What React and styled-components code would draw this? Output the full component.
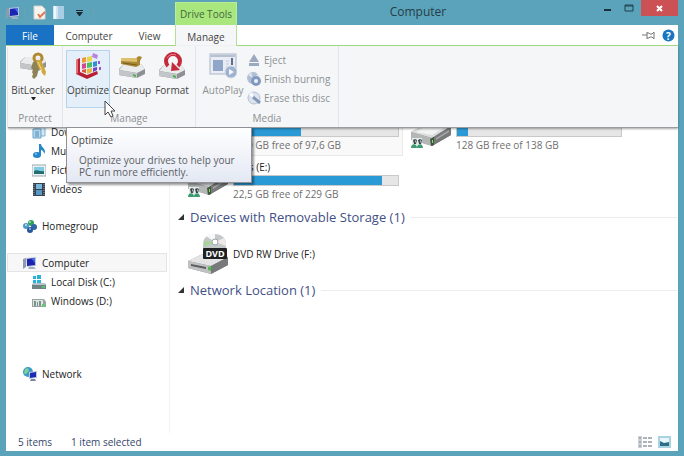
import React from 'react';
import styled, { createGlobalStyle } from 'styled-components';

const GlobalStyle = createGlobalStyle`
	* {
		box-sizing: border-box;
	}
	body {
		margin: 0;
		background-color: #5aa3bb;
		font-family: "Open Sans", "Noto Sans", sans-serif;
		font-size: 10px;
		line-height: 14px;
		color: #222;
	}
	button {
		margin: 0;
		padding: 0;
		border: 0;
		background: none;
		font: inherit;
		color: inherit;
	}
	a {
		color: inherit;
		text-decoration: none;
	}
	h1, h2, p, ul {
		margin: 0;
		padding: 0;
		font: inherit;
		list-style: none;
	}
	svg {
		display: block;
		flex: none;
	}
`;

const Window = styled.div`
	display: flex;
	flex-direction: column;
	min-height: 100vh;
	padding: 0 6px 5px;
`;

const TitleBar = styled.header`
	display: flex;
	height: 25px;
`;
const QuickAccess = styled.div`
	display: flex;
	align-items: center;
	width: 169px;
`;
const QuickButton = styled.button`
	display: flex;
	justify-content: center;
	width: 20px;
`;
const Separator = styled.span`
	width: 1px;
	height: 12px;
	margin: 0 4px;
	background-color: #6f9fb0;
`;
const ContextTab = styled.div`
	width: 62px;
	margin-top: 2px;
	padding-top: 4px;
	background-color: #a9e77e;
	border: 1px solid #b9ee95;
	border-bottom: 0;
	color: #44663a;
	text-align: center;
	white-space: nowrap;
`;
const Title = styled.h1`
	flex: 1;
	padding-top: 4px;
	font-size: 12px;
	line-height: 16px;
	text-align: center;
	color: #263c46;
`;
const Controls = styled.div`
	display: flex;
	height: 16px;
`;
const ControlButton = styled.button`
	display: flex;
	align-items: center;
	justify-content: center;
	width: ${(props) => props.$width}px;
	background-color: ${(props) => (props.$close ? '#cb5155' : 'transparent')};
`;

const TabArea = styled.div`
	position: relative;
	z-index: 1;
`;
const TabRow = styled.nav`
	display: flex;
	height: 21px;
	background-color: #fff;
	border-bottom: 1px solid #a6dd84;
`;
const Tab = styled.button`
	width: ${(props) => props.$width}px;
	height: ${(props) => (props.$active ? 21 : 20)}px;
	padding-top: 2px;
	background-color: ${(props) => (props.$active ? '#f5f6f7' : '#fff')};
	border: solid #b2e294;
	border-width: ${(props) => (props.$active ? '0 1px' : '0')};
	color: #444;
`;
const FileTab = styled(Tab)`
	background-color: #1a72c4;
	color: #fff;
`;
const TabTools = styled.div`
	display: flex;
	align-items: center;
	gap: 6px;
	margin-left: auto;
	padding-right: 3px;
`;

const Ribbon = styled.section`
	position: absolute;
	top: 100%;
	left: 2px;
	right: 0;
	display: flex;
	height: 82px;
	background-color: #f5f6f8;
	border-bottom: 1px solid #9a9da0;
	box-shadow: 0 1px 2px rgba(0, 0, 0, 0.35);
`;
const Group = styled.div`
	position: relative;
	display: flex;
	flex-direction: column;
	justify-content: space-between;
	width: ${(props) => props.$width}px;
	padding: 4px 3px 2px;
	border-right: 1px solid #e2e4e7;
`;
const GroupTools = styled.div`
	display: flex;
`;
const GroupName = styled.div`
	text-align: center;
	color: #8c8f92;
`;
const BigButton = styled.button`
	display: flex;
	flex-direction: column;
	align-items: center;
	width: ${(props) => props.$width || 44}px;
	height: 58px;
	padding-top: 1px;
	background-color: ${(props) => (props.$hover ? '#e4eff9' : 'transparent')};
	border: 1px solid ${(props) => (props.$hover ? '#b4d3ec' : 'transparent')};
	color: ${(props) => (props.disabled ? '#8d9195' : '#444')};
	white-space: nowrap;

	svg + span {
		margin-top: 3px;
	}
`;
const SmallList = styled.div`
	display: flex;
	flex-direction: column;
	gap: 5px;
	padding-top: 3px;
`;
const SmallButton = styled.button`
	display: flex;
	align-items: center;
	gap: 3px;
	height: 14px;
	color: #8d9195;
	white-space: nowrap;
`;
const Tooltip = styled.div`
	position: absolute;
	top: 100%;
	left: 3px;
	width: 186px;
	padding: 5px 4px 4px;
	background: linear-gradient(#fff, #e4e8f3);
	border: 1px solid #8f9197;
	box-shadow: 2px 2px 2px rgba(0, 0, 0, 0.4);
	color: #444;

	p {
		padding: 7px 0 0 8px;
		line-height: 12px;
		color: #5a5d64;
		white-space: nowrap;
	}
`;
const Pointer = styled.svg`
	position: absolute;
	top: 54px;
	left: 41px;
`;

const Body = styled.div`
	display: flex;
	flex: 1;
	background-color: #fff;
`;
const Sidebar = styled.nav`
	width: 164px;
	padding: 76px 2px 0 0;
	border-right: 1px solid #f3f3f3;
`;
const NavGroup = styled.ul`
	margin-bottom: ${(props) => props.$gap || 0}px;
`;
const NavLink = styled.a`
	display: flex;
	align-items: center;
	gap: 5px;
	height: 19px;
	margin-left: 1px;
	padding-left: ${(props) => (props.$nested ? 24 : 15)}px;
	background-color: ${(props) => (props.$selected ? '#f7f7f7' : 'transparent')};
	border: 1px solid ${(props) => (props.$selected ? '#e4e4e4' : 'transparent')};
`;

const Main = styled.main`
	flex: 1;
	padding: 61px 1px 0 8px;
`;
const Tiles = styled.div`
	display: grid;
	grid-template-columns: 221px 221px;
	column-gap: 2px;
	margin-left: 4px;
`;
const Tile = styled.div`
	display: flex;
	align-items: center;
	gap: 4px;
	height: 49px;
	padding: 0 3px 0 4px;
	background-color: ${(props) => (props.$selected ? '#f9f9f9' : 'transparent')};
	border: 1px solid ${(props) => (props.$selected ? '#e9e9e9' : 'transparent')};
`;
const TileInfo = styled.div`
	flex: 1;
`;
const DriveName = styled.div`
	min-height: 14px;
`;
const Space = styled.p`
	color: #6f6f6f;
`;
const Bar = styled.div`
	height: 11px;
	background-color: #e6e6e6;
	border: 1px solid #c9c9c9;
	margin: 1px 0;
`;
const BarFill = styled.div`
	height: 9px;
	background-color: #2a9ad6;
`;
const SectionTitle = styled.h2`
	display: flex;
	align-items: center;
	gap: 6px;
	height: 24px;
	font-size: 13px;
	line-height: 18px;
	color: #3f4f86;

	&::after {
		content: '';
		flex: 1;
		height: 1px;
		background-color: #ececec;
	}
`;

const StatusBar = styled.footer`
	display: flex;
	align-items: center;
	gap: 19px;
	height: 18px;
	padding: 0 7px 0 12px;
	background-color: #fff;
	color: #34476a;
`;
const ViewButtons = styled.div`
	display: flex;
	gap: 6px;
	margin-left: auto;
`;

const ComputerIcon = () => (
	<svg width="14" height="14" viewBox="0 0 14 14">
		<path d="M0 3l3-1v9l-3 2z" fill="#8f9ab0" />
		<path d="M3 2l10-1v9l-9 1z" fill="#b9c4d8" />
		<path d="M4 3l8-1v7l-8 1z" fill="#1c25b0" />
		<path d="M8 2l4 0v5z" fill="#4c6ae6" />
		<path d="M6 11h5l2 2H5z" fill="#a3aec2" />
	</svg>
);

const DriveIcon = () => (
	<svg width="42" height="34" viewBox="0 0 42 34">
		<path d="M1 17L20 7l21 4v9L22 31 1 24z" fill="#8d8f91" />
		<path d="M1 17L20 7l21 4-19 12z" fill="#dcddde" />
		<path d="M6 17l14-8 15 3-13 8z" fill="#f2f2f2" />
		<path d="M1 17l21 6v8L1 25z" fill="#b4b6b8" />
		<path d="M22 23l19-12v9L22 31z" fill="#77797b" />
		<path d="M26 23l13-8v2l-13 8z" fill="#a2a4a6" />
		<path d="M20 24l4-2v8l-3 1z" fill="#3c5a35" />
		<path d="M22 25l1 0v3l-1 0z" fill="#8edb74" />
		<path d="M2 23h10v10H2z" fill="#e4eee6" />
		<path d="M3 25l2-1 2 1-1 4H4zM8 25l2-1 2 1-1 4H9z" fill="#3c474d" />
		<path d="M5 25l1 1-1 2zM10 25l1 1-1 2z" fill="#d9dfe2" />
		<path d="M1 33c0-5 6-5 6 0zM7 33c0-5 6-5 6 0z" fill="#3d9a72" />
	</svg>
);

const DvdIcon = () => (
	<svg width="42" height="42" viewBox="0 0 42 42">
		<path d="M1 28l19-9 21 5v8L24 41 1 35z" fill="#8d8f91" />
		<path d="M1 28l19-9 21 5-17 9z" fill="#e4e4e4" />
		<path d="M1 28l23 5v8L1 35z" fill="#bfc1c2" />
		<path d="M24 33l17-9v8l-17 9z" fill="#77797b" />
		<path d="M4 31l15 3v2L4 33z" fill="#5b5d5f" />
		<path d="M21 34l3-1v5l-3-1z" fill="#52b94a" />
		<path d="M16 26V10C17-2 38-2 39 10v16z" fill="#c3c8c9" />
		<path d="M28 9L19 3c3-2 6-3 9-2z" fill="#f8f8f8" />
		<path d="M28 9l-11 5 0-6z" fill="#a8d59c" />
		<path d="M28 9l9-4c2 3 2 6 2 8z" fill="#efe9e9" />
		<circle cx="28" cy="9" r="3" fill="#fff" stroke="#9da3a5" />
		<rect x="16" y="15" width="24" height="11" rx="1" fill="#1f2022" />
		<text x="28" y="24" fontSize="9" fontWeight="700" textAnchor="middle" fill="#fff">DVD</text>
	</svg>
);

const SmallDisk = ({ y }) => (
	<g>
		<path d={`M6 ${y}h17l4 5v5l-8 4-18-3v-6z`} fill="#8e9193" />
		<path d={`M6 ${y}h17l4 5-8 4-18-3z`} fill="#e9ebec" />
		<path d={`M1 ${y + 6}l18 3v5l-18-3z`} fill="#c3c6c8" />
		<path d={`M15 ${y + 10}l3 1v2l-3-1z`} fill="#49b14a" />
	</g>
);

const BitLockerIcon = () => (
	<svg width="28" height="28" viewBox="0 0 28 28">
		<SmallDisk y={5} />
		<circle cx="19" cy="6" r="4" fill="none" stroke="#b08b31" strokeWidth="3" />
		<path d="M14 10c4-2 7 0 7 2l-3 12-3 3-2-2 1-3-1-2 1-2-2-2z" fill="#8d8258" />
		<path d="M17 9l5-1 5 12-1 4-3-3-1-3-2-1z" fill="#d0a63d" />
		<path d="M19 10l4 9" stroke="#f2dc8d" fill="none" />
	</svg>
);

const OptimizeIcon = () => (
	<svg width="28" height="28" viewBox="0 0 28 28">
		<path d="M2 8l4-2v14l7 3 10-4 1 3-11 5-11-5z" fill="#b81f33" />
		<path d="M2 8l2-1v14l-2 1z" fill="#e4717a" />
		<path d="M8 6l4-1v5l-4 1z" fill="#ee9a35" />
		<path d="M13 5l5-1v5l-5 1z" fill="#e6d64a" />
		<path d="M8 12l4-1v5l-4 1z" fill="#d44a8c" />
		<path d="M13 11l5-1v5l-5 1z" fill="#4dbd62" />
		<path d="M19 10l4-1v5l-4 1z" fill="#2f8fd8" />
		<path d="M8 18l4-1v4l-4-1z" fill="#e0553d" />
		<path d="M13 17l5-1v4l-5 2z" fill="#e9b93b" />
		<path d="M19 16l4-1v3l-4 2z" fill="#7440c2" />
		<path d="M19 1l5 2-1 4-5-2z" fill="#b784e2" />
		<path d="M24 9l2 0v3l-2 0zM25 15l2 0v3l-2 0z" fill="#9856d6" />
	</svg>
);

const CleanupIcon = () => (
	<svg width="28" height="28" viewBox="0 0 28 28">
		<SmallDisk y={12} />
		<path d="M3 6l15 0 3-2 3 1-2 4 0 4-4 2-15-3z" fill="#a98735" />
		<path d="M3 6l16 0 0 4-16-1z" fill="#dcc06d" />
		<path d="M5 11l14 2" stroke="#7a5d20" fill="none" />
	</svg>
);

const FormatIcon = () => (
	<svg width="28" height="28" viewBox="0 0 28 28">
		<SmallDisk y={13} />
		<path d="M10 14a7 7 0 1 1 10 0" fill="none" stroke="#c42a3c" strokeWidth="4" />
		<path d="M14 10l-1 9 9-1z" fill="#c42a3c" />
		<path d="M9 6a7 7 0 0 1 9-3" fill="none" stroke="#e8838d" />
	</svg>
);

const AutoPlayIcon = () => (
	<svg width="28" height="28" viewBox="0 0 28 28">
		<rect x="1" y="2" width="26" height="20" fill="#e9edf3" stroke="#a9b6c8" />
		<path d="M2 4h24" stroke="#b5c1d3" strokeWidth="2" />
		<rect x="4" y="8" width="10" height="11" fill="#8fa6c9" />
		<path d="M17 9h3M17 12h3M17 15h3" stroke="#c0cad9" />
		<path d="M23 6v7" stroke="#5f6f89" strokeWidth="2" />
		<circle cx="22" cy="20" r="6" fill="#9db2d2" stroke="#d2dbe8" />
		<path d="M20 17l5 3-5 3z" fill="#f5f8fc" />
	</svg>
);

const EjectIcon = () => (
	<svg width="14" height="14" viewBox="0 0 14 14">
		<path d="M7 1l5 8H2z" fill="#9aa9be" />
		<path d="M2 10h10v3H2z" fill="#9aa9be" />
	</svg>
);

const BurnIcon = () => (
	<svg width="14" height="14" viewBox="0 0 14 14">
		<circle cx="6" cy="6" r="6" fill="#b1bfd4" />
		<path d="M6 6L1 3l3-3zM6 6l5-4 1 4z" fill="#dbe3ee" />
		<circle cx="9" cy="9" r="5" fill="#8299bf" />
		<circle cx="9" cy="9" r="2" fill="#edf2f9" />
	</svg>
);

const EraseIcon = () => (
	<svg width="14" height="14" viewBox="0 0 14 14">
		<circle cx="7" cy="7" r="6" fill="#dce3ee" stroke="#b3c0d4" />
		<path d="M7 7L2 4l3-3z" fill="#fff" />
		<path d="M6 6l7 6" stroke="#8197b8" strokeWidth="3" />
	</svg>
);

const DownloadsIcon = () => (
	<svg width="14" height="14" viewBox="0 0 14 14">
		<path d="M4 0h9v11H4z" fill="#d3e8f5" stroke="#7fb2d3" />
		<path d="M1 4h8v9H1z" fill="#b7d8ed" stroke="#6aa3c9" />
		<path d="M3 7h4M3 9h4M3 11h4" stroke="#4c8cb8" />
	</svg>
);

const MusicIcon = () => (
	<svg width="14" height="14" viewBox="0 0 14 14">
		<ellipse cx="5" cy="11" rx="4" ry="3" fill="#2587c7" />
		<path d="M7 0h2c0 3 4 4 4 8l-1 2c0-3-2-4-3-4v5H7z" fill="#2587c7" />
		<circle cx="4" cy="10" r="1" fill="#7cc4ef" />
	</svg>
);

const PicturesIcon = () => (
	<svg width="14" height="14" viewBox="0 0 14 14">
		<rect x="0" y="2" width="14" height="11" fill="#eef2f4" stroke="#9ba7ad" />
		<rect x="2" y="4" width="10" height="7" fill="#7ecbe2" />
		<path d="M2 8c3-2 6 1 10 0v3H2z" fill="#206f6e" />
	</svg>
);

const VideosIcon = () => (
	<svg width="14" height="14" viewBox="0 0 14 14">
		<rect x="1" y="1" width="12" height="13" fill="#36424e" />
		<rect x="4" y="2" width="6" height="5" fill="#77b5dc" />
		<rect x="4" y="8" width="6" height="5" fill="#5797c4" />
		<path d="M2 2v11M12 2v11" stroke="#8d98a3" strokeDasharray="1 1" />
	</svg>
);

const HomegroupIcon = () => (
	<svg width="14" height="14" viewBox="0 0 14 14">
		<circle cx="8" cy="4" r="3" fill="#2f9e58" />
		<circle cx="3" cy="7" r="3" fill="#4d9ac9" />
		<circle cx="11" cy="8" r="3" fill="#2f66a8" />
		<circle cx="7" cy="11" r="3" fill="#27569b" />
		<circle cx="7" cy="3" r="1" fill="#a6e2b0" />
		<circle cx="3" cy="6" r="1" fill="#bfe0f5" />
		<circle cx="7" cy="10" r="1" fill="#8fbce6" />
	</svg>
);

const LocalDiskIcon = () => (
	<svg width="14" height="14" viewBox="0 0 14 14">
		<path d="M1 1h3v3H1zM5 0h4v4H5zM1 5h3v3H1zM5 5h4v3H5z" fill="#25b3dd" />
		<path d="M0 9h14v5H0z" fill="#6f8286" />
		<path d="M1 8h12l1 2H0z" fill="#b7c3c6" />
		<path d="M10 11h3v2h-3z" fill="#54c169" />
	</svg>
);

const WindowsDiskIcon = () => (
	<svg width="14" height="14" viewBox="0 0 14 14">
		<path d="M0 5h12l2 3v5H0z" fill="#9aa3a3" />
		<path d="M1 6h10v6H1z" fill="#dfe5e5" />
		<path d="M2 7h2v5H2zM5 8h1v4H5zM7 7h2v5H7z" fill="#7d9488" />
		<path d="M10 10h3v3h-3z" fill="#6fc27c" />
	</svg>
);

const NetworkIcon = () => (
	<svg width="14" height="14" viewBox="0 0 14 14">
		<circle cx="5" cy="5" r="5" fill="#3a9cc9" />
		<path d="M2 2c3-2 5 1 3 3S2 8 1 6z" fill="#7fd09a" />
		<path d="M6 5l8-1v7l-8 1z" fill="#c0cadb" />
		<path d="M7 6l6-1v5l-6 1z" fill="#1c2bb5" />
		<path d="M8 12h4l1 2H7z" fill="#7b88a0" />
	</svg>
);

const libraries = [
	{ name: 'Downloads', Icon: DownloadsIcon },
	{ name: 'Music', Icon: MusicIcon },
	{ name: 'Pictures', Icon: PicturesIcon },
	{ name: 'Videos', Icon: VideosIcon },
];

const computer = [
	{ name: 'Computer', Icon: ComputerIcon, root: true },
	{ name: 'Local Disk (C:)', Icon: LocalDiskIcon },
	{ name: 'Windows (D:)', Icon: WindowsDiskIcon },
];

const drives = [
	{ id: 'c', used: 41, space: '57,0 GB free of 97,6 GB', selected: true },
	{ id: 'd', used: 7, space: '128 GB free of 138 GB' },
	{ id: 'e', name: 'Files (E:)', used: 90, space: '22,5 GB free of 229 GB' },
];

const Arrow = () => (
	<svg width="6" height="6" viewBox="0 0 6 6">
		<path d="M6 0v6H0z" fill="#333" />
	</svg>
);

function NavItem({ item, nested, selected }) {
	return (
		<li>
			<NavLink href="#" $nested={nested} $selected={selected}>
				<item.Icon />
				{item.name}
			</NavLink>
		</li>
	);
}

function RibbonPanel() {
	return (
		<Ribbon>
			<Group $width={55}>
				<GroupTools>
					<BigButton>
						<BitLockerIcon />
						<span>BitLocker</span>
						<svg width="5" height="3" viewBox="0 0 5 3"><path d="M0 0h5L3 3H2z" fill="#222" /></svg>
					</BigButton>
				</GroupTools>
				<GroupName>Protect</GroupName>
			</Group>
			<Group $width={133}>
				<GroupTools>
					<BigButton $hover aria-describedby="optimize-tip">
						<OptimizeIcon />
						<span>Optimize</span>
					</BigButton>
					<BigButton>
						<CleanupIcon />
						<span>Cleanup</span>
					</BigButton>
					<BigButton $width={36}>
						<FormatIcon />
						<span>Format</span>
					</BigButton>
				</GroupTools>
				<GroupName>Manage</GroupName>
				<Tooltip role="tooltip" id="optimize-tip">
					Optimize
					<p>Optimize your drives to help your<br />PC run more efficiently.</p>
				</Tooltip>
				<Pointer width="12" height="18" viewBox="0 0 12 18">
					<path d="M1 1v14l3-3 3 5 2-1-2-5h4z" fill="#fff" stroke="#444" />
				</Pointer>
			</Group>
			<Group $width={143}>
				<GroupTools>
					<BigButton disabled $width={48}>
						<AutoPlayIcon />
						<span>AutoPlay</span>
					</BigButton>
					<SmallList>
						<SmallButton disabled><EjectIcon />Eject</SmallButton>
						<SmallButton disabled><BurnIcon />Finish burning</SmallButton>
						<SmallButton disabled><EraseIcon />Erase this disc</SmallButton>
					</SmallList>
				</GroupTools>
				<GroupName>Media</GroupName>
			</Group>
		</Ribbon>
	);
}

function App() {
	return (
		<Window>
			<GlobalStyle />
			<TitleBar>
				<QuickAccess>
					<ComputerIcon />
					<Separator />
					<QuickButton aria-label="Properties">
						<svg width="13" height="15" viewBox="0 0 13 15">
							<path d="M1 1h8l3 3v10H1z" fill="#f7f3ef" stroke="#d5d2cd" />
							<path d="M5 9l2 3 5-5" fill="none" stroke="#dd7a55" strokeWidth="2" />
						</svg>
					</QuickButton>
					<QuickButton aria-label="New folder">
						<svg width="12" height="15" viewBox="0 0 12 15">
							<path d="M0 1h11v13H0z" fill="#cfe4f2" />
							<path d="M5 1h6v13H5z" fill="#a9cde4" />
							<path d="M2 1v13" stroke="#edf7fc" strokeWidth="2" />
						</svg>
					</QuickButton>
					<QuickButton aria-label="Customize">
						<svg width="7" height="6" viewBox="0 0 7 6">
							<path d="M0 0h7v1H0zM0 2h7L4 6H3z" fill="#1c2b33" />
						</svg>
					</QuickButton>
					<Separator />
				</QuickAccess>
				<ContextTab>Drive Tools</ContextTab>
				<Title>Computer</Title>
				<Controls>
					<ControlButton $width={18} aria-label="Minimize">
						<svg width="8" height="8" viewBox="0 0 8 8"><path d="M0 5h7v2H0z" fill="#1e2f38" /></svg>
					</ControlButton>
					<ControlButton $width={24} aria-label="Maximize">
						<svg width="10" height="8" viewBox="0 0 10 8"><path d="M1 1h8v6H1zM1 2h8" fill="none" stroke="#1e3e4c" /></svg>
					</ControlButton>
					<ControlButton $width={37} $close aria-label="Close">
						<svg width="7" height="7" viewBox="0 0 7 7"><path d="M1 1l5 5M6 1L1 6" stroke="#fff" strokeWidth="2" /></svg>
					</ControlButton>
				</Controls>
			</TitleBar>

			<TabArea>
				<TabRow>
					<FileTab $width={48}>File</FileTab>
					<Tab $width={70}>Computer</Tab>
					<Tab $width={51}>View</Tab>
					<Tab $width={62} $active>Manage</Tab>
					<TabTools>
						<button aria-label="Pin the ribbon">
							<svg width="14" height="9" viewBox="0 0 14 9">
								<path d="M0 4h5M5 1v7M5 2h2l1 1h2l2-2v7l-2-2H8L7 7H5" fill="none" stroke="#777" />
							</svg>
						</button>
						<button aria-label="Help">
							<svg width="13" height="13" viewBox="0 0 13 13">
								<circle cx="6.500" cy="6.500" r="6" fill="#1976c1" />
								<text x="6.500" y="10.500" fontSize="10" fontWeight="700" textAnchor="middle" fill="#fff">?</text>
							</svg>
						</button>
					</TabTools>
				</TabRow>
				<RibbonPanel />
			</TabArea>

			<Body>
				<Sidebar>
					<NavGroup $gap={18}>
						{libraries.map((item) => <NavItem key={item.name} item={item} nested />)}
					</NavGroup>
					<NavGroup $gap={18}>
						<NavItem item={{ name: 'Homegroup', Icon: HomegroupIcon }} />
					</NavGroup>
					<NavGroup $gap={54}>
						{computer.map((item) => (
							<NavItem key={item.name} item={item} nested={!item.root} selected={item.root} />
						))}
					</NavGroup>
					<NavGroup>
						<NavItem item={{ name: 'Network', Icon: NetworkIcon }} />
					</NavGroup>
				</Sidebar>
				<Main>
					<Tiles>
						{drives.map((drive) => (
							<Tile key={drive.id} $selected={drive.selected}>
								<DriveIcon />
								<TileInfo>
									<DriveName>{drive.name}</DriveName>
									<Bar><BarFill style={{ width: `${drive.used}%` }} /></Bar>
									<Space>{drive.space}</Space>
								</TileInfo>
							</Tile>
						))}
					</Tiles>
					<SectionTitle><Arrow />Devices with Removable Storage (1)</SectionTitle>
					<Tiles>
						<Tile>
							<DvdIcon />
							<TileInfo>DVD RW Drive (F:)</TileInfo>
						</Tile>
					</Tiles>
					<SectionTitle><Arrow />Network Location (1)</SectionTitle>
				</Main>
			</Body>

			<StatusBar>
				<span>5 items</span>
				<span>1 item selected</span>
				<ViewButtons>
					<button aria-label="Details view">
						<svg width="14" height="12" viewBox="0 0 14 12">
							<path d="M0 0h4v12H0z" fill="#cdd2d6" />
							<path d="M1 2h2M1 6h2M1 10h2" stroke="#7c8790" />
							<path d="M5 2h4M10 2h4M5 6h4M10 6h4M5 10h4M10 10h4" stroke="#5d6670" />
						</svg>
					</button>
					<button aria-label="Large icons view">
						<svg width="13" height="12" viewBox="0 0 13 12">
							<path d="M0 0h13v12H0z" fill="#a9d3e0" />
							<path d="M2 2h9v8H2z" fill="#e7f6fa" />
							<path d="M2 5l4 2 5-1v4H2z" fill="#2b6f86" />
						</svg>
					</button>
				</ViewButtons>
			</StatusBar>
		</Window>
	);
}

export default App;
